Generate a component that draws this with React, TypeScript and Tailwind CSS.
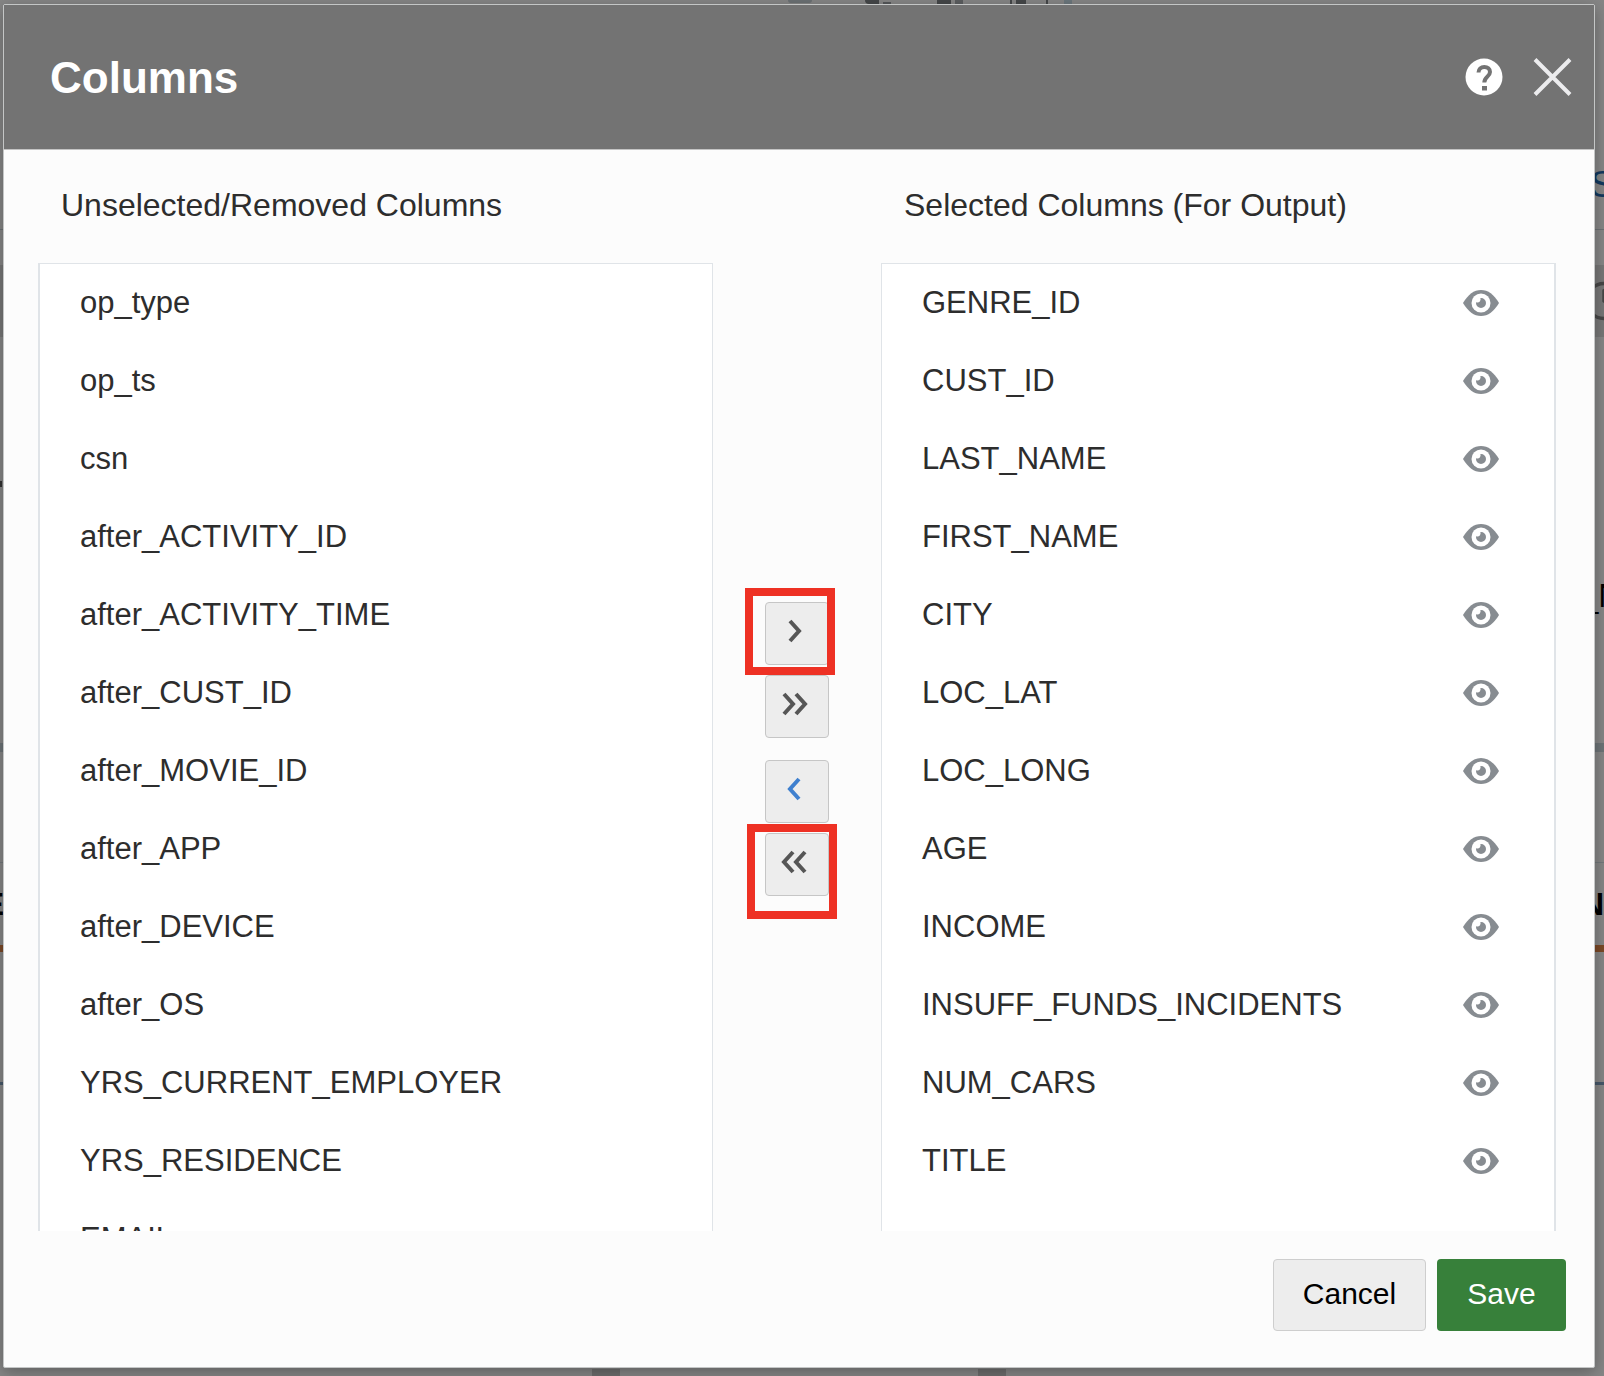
import { Clock } from "lucide-react";

const unselected = [
  "op_type",
  "op_ts",
  "csn",
  "after_ACTIVITY_ID",
  "after_ACTIVITY_TIME",
  "after_CUST_ID",
  "after_MOVIE_ID",
  "after_APP",
  "after_DEVICE",
  "after_OS",
  "YRS_CURRENT_EMPLOYER",
  "YRS_RESIDENCE",
  "EMAIL",
];

const selected = [
  "GENRE_ID",
  "CUST_ID",
  "LAST_NAME",
  "FIRST_NAME",
  "CITY",
  "LOC_LAT",
  "LOC_LONG",
  "AGE",
  "INCOME",
  "INSUFF_FUNDS_INCIDENTS",
  "NUM_CARS",
  "TITLE",
];

function EyeIcon() {
  return (
    <svg viewBox="0 0 36 28" className="h-7 w-9" aria-hidden="true">
      <path d="M0 14C5 5.500 11 1 18 1s13 4.500 18 13c-5 8.500-11 13-18 13S5 22.500 0 14Z" fill="#878c91" />
      <circle cx="18" cy="14" r="9.500" fill="#fff" />
      <path d="M18 9a5 5 0 1 1-5 5c0-.3 0-.6.1-.8 1.400.6 2.900.3 3.700-.7.8-1 1-2.300.5-3.400.2-.1.500-.1.700-.1Z" fill="#878c91" />
    </svg>
  );
}

function Chevrons({ paths }: { paths: string[] }) {
  return (
    <svg viewBox="0 0 32 26" className="mb-1.5 mr-1 h-[26px] w-8" fill="none" stroke="currentColor" strokeWidth="4" aria-hidden="true">
      {paths.map((d) => (
        <path key={d} d={d} />
      ))}
    </svg>
  );
}

const moveButton =
  "flex h-[63px] w-16 items-center justify-center rounded-[4px] border border-[#c6c6c6] bg-[#ededed] text-[#565656]";

/* Dimmed page that shows around the edges of the dialog */
function Backdrop() {
  return (
    <div aria-hidden="true" className="absolute inset-0 flex flex-col overflow-hidden bg-[#868686]">
      <div className="flex h-1 shrink-0 pl-[788px]">
        <span className="h-[3px] w-6 rounded-b-full bg-[#6c7174]" />
        <span className="ml-[53px] h-1 w-[14px] rounded-bl-full bg-[#454749]" />
        <span className="ml-1 mt-0.5 h-0.5 w-2 bg-[#55585a]" />
        <span className="ml-[46px] h-1 w-[14px] bg-[#454749]" />
        <span className="ml-1 h-1 w-2 bg-[#5c5e60]" />
        <span className="ml-[47px] h-1 w-0.5 bg-[#454749]" />
        <span className="ml-1 h-1 w-[10px] bg-[#454749]" />
        <span className="ml-5 h-1 w-0.5 bg-[#454749]" />
        <span className="ml-4 h-1 w-2 bg-[#6c777d]" />
      </div>
      <div className="flex h-[226px] shrink-0 justify-end border-b border-[#6c7174] pt-[160px]">
        <span className="w-[14px] text-[37px] leading-[42px] text-[#12395f]">S</span>
      </div>
      <div className="h-[35px] shrink-0" />
      <div className="flex h-[72px] shrink-0 items-center justify-end bg-[#777]">
        <span className="w-[21px]">
          <Clock size={42} strokeWidth={2} className="max-w-none text-[#474747]" />
        </span>
      </div>
      <div className="flex h-[406px] shrink-0 justify-between pt-[144px]">
        <span className="h-1.5 w-0.5 bg-[#333]" />
        <span className="w-[24px] pt-[94px] text-[33px] leading-[42px] text-black">_N</span>
      </div>
      <div className="h-[9px] shrink-0 bg-[#6d7477]" />
      <div className="h-[110px] shrink-0" />
      <div className="flex h-[83px] shrink-0 items-center justify-between border-t border-[#73787b] text-[32px] font-bold leading-[40px] text-black">
        <span className="flex w-1 justify-end">E</span>
        <span className="w-[23px]">N</span>
      </div>
      <div className="h-[7px] shrink-0 bg-[#7b4927]" />
      <div className="h-[130px] shrink-0" />
      <div className="h-[3px] shrink-0 bg-[#46586a]" />
      <div className="flex flex-1 items-end pl-[592px]">
        <span className="h-[7px] w-7 bg-[#6d6d6d]" />
        <span className="ml-[358px] h-[7px] w-7 bg-[#6d6d6d]" />
      </div>
    </div>
  );
}

export default function App() {
  return (
    <div className="relative h-screen min-h-[900px] font-['Liberation_Sans',Arial,sans-serif] text-[#2d2d2d]">
      <Backdrop />
      <div className="relative flex h-full flex-col pb-2 pl-[3px] pr-[9px] pt-1">
        <section
          role="dialog"
          aria-labelledby="dialog-title"
          className="flex min-h-0 flex-1 flex-col rounded-[2px] border border-[#c4c6c6] bg-[#fcfcfc] shadow-[0_4px_16px_rgba(0,0,0,0.3)]"
        >
          <header className="flex h-[145px] shrink-0 items-center border-b border-[#c4c4c4] bg-[#737373] pl-[46px] pr-[21px]">
            <h1 id="dialog-title" className="flex-1 pt-0.5 text-[44px] font-bold leading-[52px] text-white">
              Columns
            </h1>
            <button type="button" aria-label="Help" className="mr-[30px]">
              <svg viewBox="0 0 38 38" className="h-[38px] w-[38px]" aria-hidden="true">
                <circle cx="19" cy="19" r="18.500" fill="#fff" />
                <path d="M13.500 14.500c0-3.500 2.500-5.500 5.800-5.500s5.700 2 5.700 5c0 4.500-5.700 5-5.700 10.500" fill="none" stroke="#737373" strokeWidth="4" />
                <rect x="17" y="28" width="5" height="4.500" fill="#737373" />
              </svg>
            </button>
            <button type="button" aria-label="Close">
              <svg viewBox="0 0 40 38" className="h-[38px] w-10" aria-hidden="true">
                <path d="M2 1.500 37 36.500M37 1.500 2 36.500" stroke="#ececee" strokeWidth="4" />
              </svg>
            </button>
          </header>

          <div className="flex min-h-0 flex-1 pl-[34px] pr-[38px]">
            <div className="flex min-h-0 min-w-0 flex-1 flex-col">
              <h2 className="h-[113px] shrink-0 pl-[23px] pt-[35px] text-[32px] leading-[40px]">Unselected/Removed Columns</h2>
              <ul className="min-h-0 flex-1 overflow-y-auto border-l-2 border-r border-t border-[#e0e4e8] bg-white pl-10 [scrollbar-width:none]">
                {unselected.map((name) => (
                  <li key={name} className="flex h-[78px] items-center text-[31px] leading-[40px]">
                    {name}
                  </li>
                ))}
              </ul>
            </div>

            <div className="flex w-[168px] shrink-0 flex-col items-center justify-center pt-[117px]">
              <div className="relative">
                <button type="button" aria-label="Add column" className={moveButton}>
                  <Chevrons paths={["M11 3 20 13 11 23"]} />
                </button>
                <span className="pointer-events-none absolute -left-5 -top-3.5 h-[87px] w-[90px] border-8 border-[#ee3124]" />
              </div>
              <button type="button" aria-label="Add all columns" className={`${moveButton} mt-[10px]`}>
                <Chevrons paths={["M5 3 14 13 5 23", "M17 3 26 13 17 23"]} />
              </button>
              <button type="button" aria-label="Remove column" className={`${moveButton} mt-[22px]`}>
                <span className="text-[#3f80cf]">
                  <Chevrons paths={["M20 3 11 13 20 23"]} />
                </span>
              </button>
              <div className="relative mt-[10px]">
                <button type="button" aria-label="Remove all columns" className={moveButton}>
                  <Chevrons paths={["M14 3 5 13 14 23", "M26 3 17 13 26 23"]} />
                </button>
                <span className="pointer-events-none absolute -left-[18px] -top-[9px] h-[95px] w-[90px] border-8 border-[#ee3124]" />
              </div>
            </div>

            <div className="flex min-h-0 min-w-0 flex-1 flex-col">
              <h2 className="h-[113px] shrink-0 pl-[23px] pt-[35px] text-[32px] leading-[40px]">Selected Columns (For Output)</h2>
              <ul className="min-h-0 flex-1 overflow-y-auto border-l border-r-2 border-t border-[#e0e4e8] bg-white pl-10 pr-[55px] [scrollbar-width:none]">
                {selected.map((name) => (
                  <li key={name} className="flex h-[78px] items-center justify-between text-[31px] leading-[40px]">
                    <span>{name}</span>
                    <button type="button" aria-label={`Show ${name}`}>
                      <EyeIcon />
                    </button>
                  </li>
                ))}
              </ul>
            </div>
          </div>

          <footer className="flex shrink-0 justify-end gap-[11px] pb-9 pr-7 pt-7 text-[30px] leading-[36px]">
            <button type="button" className="h-[72px] w-[153px] rounded-[4px] border border-[#cecece] bg-[#ededed] pb-0.5 text-black">
              Cancel
            </button>
            <button type="button" className="h-[72px] w-[129px] rounded-[4px] bg-[#37803a] pb-0.5 text-white">
              Save
            </button>
          </footer>
        </section>
      </div>
    </div>
  );
}
